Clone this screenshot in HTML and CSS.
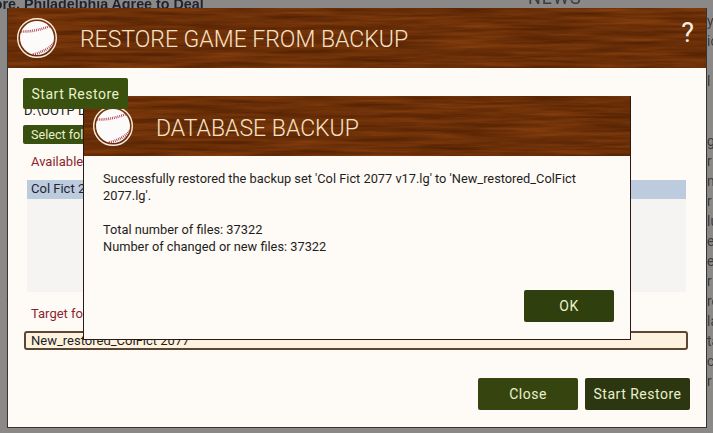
FILE: index.html
```html
<!DOCTYPE html>
<html lang="en">
<head>
    <meta charset="UTF-8">
    <meta name="viewport" content="width=device-width, initial-scale=1.0">
    <title>Restore Game From Backup</title>
    <link rel="stylesheet" href="styles.css">
</head>
<body>
    <svg class="defs" width="0" height="0">
        <defs>
            <filter id="woodGrain" x="0" y="0" width="100%" height="100%" color-interpolation-filters="sRGB">
                <feTurbulence type="fractalNoise" baseFrequency="0.012 0.22" numOctaves="4" seed="7"/>
                <feColorMatrix type="matrix" values="0.3 0 0 0 0.27  0.17 0 0 0 0.1  0.06 0 0 0 0  0 0 0 0 1"/>
            </filter>
            <symbol id="baseball" viewBox="0 0 40 40">
                <circle cx="20" cy="20" r="19.3" fill="none" stroke="#fbeee0" stroke-width="1.4"/>
                <circle cx="20" cy="20" r="17" fill="#fdfafa"/>
                <path d="M4 13.5 Q18 14 33 8" fill="none" stroke="#a83048" stroke-width="2.6" stroke-dasharray="0.8 1.1"/>
                <path d="M16 36.5 Q30 33 37 25" fill="none" stroke="#a83048" stroke-width="2.6" stroke-dasharray="0.8 1.1"/>
            </symbol>
        </defs>
    </svg>

    <!-- page behind the dialogs -->
    <div class="backdrop">
        <div class="headline-row">
            <div class="headline">Baltimore, Philadelphia Agree to Deal</div>
            <div class="news-title">NEWS</div>
        </div>
        <div class="columns">
            <div class="side side-left">
                <div>y,</div>
                <div>ol</div>
                <div>ic</div>
                <div>- -</div>
                <div>&nbsp;</div>
                <div>|</div>
                <div>s</div>
                <div>&nbsp;</div>
                <div class="strong">rs</div>
                <div>/ |</div>
                <div>&nbsp;</div>
                <div>- -</div>
                <div>ei</div>
                <div>- -</div>
                <div>&nbsp;</div>
                <div>e (</div>
                <div>&nbsp;</div>
                <div class="strong">nc</div>
                <div>s I</div>
                <div>op</div>
                <div>- -</div>
                <div>- -</div>
            </div>
            <div class="side side-right">
                <div>y</div>
                <div>ic</div>
                <div>&nbsp;</div>
                <div>l</div>
                <div>&nbsp;</div>
                <div>&nbsp;</div>
                <div>g</div>
                <div>r</div>
                <div>ng</div>
                <div>r</div>
                <div>lu</div>
                <div>e</div>
                <div>e</div>
                <div>r</div>
                <div>re</div>
                <div>la</div>
                <div>ta</div>
                <div>ck</div>
                <div>r</div>
            </div>
        </div>
    </div>

    <div class="window restore-window">
        <div class="wood-header">
            <svg class="wood" width="100%" height="100%"><rect width="100%" height="100%" filter="url(#woodGrain)"/></svg>
            <svg class="ball"><use href="#baseball"/></svg>
            <h1 class="title restore-title">RESTORE GAME FROM BACKUP</h1>
            <span class="help">?</span>
        </div>
        <div class="restore-body">
            <button class="btn btn-top">Start Restore</button>
            <div class="path-line">D:\OOTP Developments\saved_games</div>
            <button class="btn btn-small">Select folder</button>
            <div class="label">Available backups</div>
            <div class="backup-list">
                <div class="backup-row">Col Fict 2077 v17.lg</div>
            </div>
            <div class="label label-target">Target folder name</div>
            <input class="target-input" type="text" value="New_restored_ColFict 2077">
            <div class="restore-footer">
                <button class="btn btn-close">Close</button>
                <button class="btn btn-start">Start Restore</button>
            </div>
        </div>
    </div>

    <div class="window backup-dialog">
        <div class="wood-header">
            <svg class="wood" width="100%" height="100%"><rect width="100%" height="100%" filter="url(#woodGrain)"/></svg>
            <svg class="ball"><use href="#baseball"/></svg>
            <h2 class="title dialog-title">DATABASE BACKUP</h2>
        </div>
        <div class="dialog-body">
            <p class="message">Successfully restored the backup set 'Col Fict 2077 v17.lg' to 'New_restored_ColFict 2077.lg'.</p>
            <p class="message">Total number of files: 37322<br>Number of changed or new files: 37322</p>
            <div class="dialog-footer">
                <button class="btn btn-ok">OK</button>
            </div>
        </div>
    </div>
</body>
</html>
```

FILE: styles.css
```css
body {
    margin: 0;
    height: 433px;
    overflow: hidden;
    background-color: #8b8987;
    color: #22211f;
    font-family: Roboto, "Liberation Sans", sans-serif;
}
.defs {
    position: absolute;
}
.backdrop {
    height: 433px;
    overflow: hidden;
    filter: blur(0.4px);
}
.headline-row {
    display: flex;
    height: 8px;
    line-height: 8px;
    color: #1d2330;
}
.headline {
    width: 528px;
    margin-left: -50px;
    margin-right: 50px;
    font-size: 14.3px;
    font-weight: bold;
    font-family: "Liberation Sans", sans-serif;
    white-space: nowrap;
    flex-shrink: 0;
}
.news-title {
    font-size: 18px;
    letter-spacing: 1px;
    margin-top: -6px;
    color: #3a3c40;
}
.columns {
    display: flex;
    justify-content: space-between;
    padding-top: 3px;
    font-size: 14px;
    line-height: 18.6px;
    color: #3c3d40;
}
.side {
    width: 22px;
    overflow: hidden;
    white-space: nowrap;
}
.side-left {
    width: 22px;
    text-align: right;
}
.side-right {
    width: 6px;
    line-height: 20px;
}
.strong {
    font-weight: bold;
}
.window {
    position: absolute;
    box-sizing: border-box;
    display: flex;
    flex-direction: column;
    background-color: #fefaf6;
    border: 1px solid #3a3431;
    border-top: none;
}
.restore-window {
    left: 7px;
    top: 8px;
    width: 700px;
    height: 420px;
}
.backup-dialog {
    left: 83px;
    top: 96px;
    width: 548px;
    height: 244px;
    border-color: #2c1a12;
}
.wood-header {
    position: relative;
    display: flex;
    align-items: center;
    height: 60px;
    flex-shrink: 0;
    background-color: #70340a;
}
.wood {
    position: absolute;
    left: 0;
    top: 0;
}
.ball {
    position: relative;
    width: 40px;
    height: 40px;
    margin-left: 9px;
    flex-shrink: 0;
}
.title {
    position: relative;
    margin: 0;
    padding-top: 2px;
    font-weight: 300;
    font-size: 23px;
    color: #f8e2c6;
}
.restore-title {
    margin-left: 23px;
}
.dialog-title {
    margin-left: 23px;
    padding-top: 4px;
}
.help {
    position: absolute;
    right: 12px;
    top: 9px;
    font-size: 27px;
    color: #f6efe4;
}
.restore-body {
    position: relative;
    display: flex;
    flex-direction: column;
    align-items: flex-start;
    flex: 1;
    padding: 10px 16px 17px 15px;
    font-size: 13px;
}
.btn {
    border: none;
    border-radius: 2px;
    background-color: #364510;
    color: #e9f1cb;
    font-family: Roboto, "Liberation Sans", sans-serif;
    font-size: 14px;
    letter-spacing: 0.5px;
    padding: 0;
}
.btn-top {
    position: relative;
    width: 105px;
    height: 31px;
    background-color: #39500f;
    z-index: 1;
}
.path-line {
    margin: -6px 0 0 1px;
    height: 22px;
    line-height: 16px;
    color: #1f1e1c;
}
.btn-small {
    width: 105px;
    height: 19px;
    margin-top: 0;
    padding-left: 8px;
    font-size: 12.6px;
    letter-spacing: 0;
    text-align: left;
    background-color: #39500f;
}
.label {
    margin: 9px 0 0 8px;
    line-height: 17px;
    color: #8b2530;
}
.backup-list {
    align-self: stretch;
    height: 112px;
    margin: 10px 4px 0 4px;
    background-color: #f5f4f2;
    border-radius: 2px;
}
.backup-row {
    height: 19px;
    line-height: 18px;
    padding-left: 4px;
    background-color: #bccbde;
    color: #1d2430;
}
.label-target {
    margin-top: 13px;
}
.target-input {
    box-sizing: border-box;
    width: 664px;
    height: 19px;
    margin: 9px 0 0 1px;
    padding: 0 5px;
    border: 2px solid #5c4633;
    border-radius: 3px;
    background-color: #fdf2e0;
    color: #1f1e1c;
    font-family: Roboto, "Liberation Sans", sans-serif;
    font-size: 13px;
}
.restore-footer {
    display: flex;
    gap: 7px;
    align-self: flex-end;
    margin-top: auto;
}
.btn-close {
    width: 100px;
    height: 32px;
}
.btn-start {
    width: 105px;
    height: 32px;
    background-color: #2c3610;
}
.dialog-body {
    display: flex;
    flex-direction: column;
    flex: 1;
    padding: 14px 16px 17px 19px;
}
.message {
    margin: 0 0 17px 0;
    max-width: 490px;
    font-size: 12.8px;
    line-height: 17px;
    color: #1f1e1c;
}
.dialog-footer {
    display: flex;
    justify-content: flex-end;
    margin-top: auto;
}
.btn-ok {
    width: 90px;
    height: 32px;
    background-color: #303f0e;
}
```
